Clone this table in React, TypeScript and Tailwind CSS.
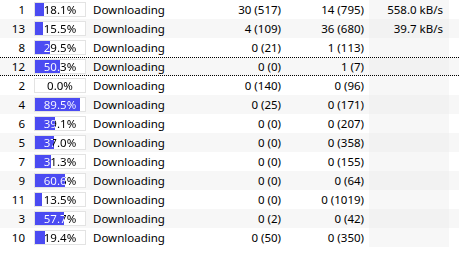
import React from 'react';

type Row = {
  id: number;
  progress: number;
  seeds: string;
  peers: string;
  speed?: string;
};

const ROWS: Row[] = [
  { id: 1, progress: 18.1, seeds: '30 (517)', peers: '14 (795)', speed: '558.0 kB/s' },
  { id: 13, progress: 15.5, seeds: '4 (109)', peers: '36 (680)', speed: '39.7 kB/s' },
  { id: 8, progress: 29.5, seeds: '0 (21)', peers: '1 (113)' },
  { id: 12, progress: 50.3, seeds: '0 (0)', peers: '1 (7)' },
  { id: 2, progress: 0.0, seeds: '0 (140)', peers: '0 (96)' },
  { id: 4, progress: 89.5, seeds: '0 (25)', peers: '0 (171)' },
  { id: 6, progress: 39.1, seeds: '0 (0)', peers: '0 (207)' },
  { id: 5, progress: 37.0, seeds: '0 (0)', peers: '0 (358)' },
  { id: 7, progress: 31.3, seeds: '0 (0)', peers: '0 (155)' },
  { id: 9, progress: 60.6, seeds: '0 (0)', peers: '0 (64)' },
  { id: 11, progress: 13.5, seeds: '0 (0)', peers: '0 (1019)' },
  { id: 3, progress: 57.7, seeds: '0 (2)', peers: '0 (42)' },
  { id: 10, progress: 19.4, seeds: '0 (50)', peers: '0 (350)' },
];

const FOCUSED = 3;

// bar is 50px wide inside its border; the label turns white over the filled part
function Progress({ value }: { value: number }) {
  const fill = value / 2;
  return (
    <div
      className="flex h-[15px] w-[52px] items-center justify-center border border-[#e3e3e3]"
      style={{ background: `linear-gradient(to right, #4b4bf2 ${fill}px, #ffffff ${fill}px)` }}
    >
      <span
        className="block w-[50px] bg-clip-text text-center text-transparent"
        style={{ backgroundImage: `linear-gradient(to right, #ffffff ${fill}px, #000000 ${fill}px)` }}
      >
        {value.toFixed(1)}%
      </span>
    </div>
  );
}

export default function App() {
  return (
    <div className="h-[253px] w-[459px] overflow-hidden bg-white font-['Noto_Sans',sans-serif] text-[11.5px] leading-none text-black">
      {ROWS.map((r, i) => {
        const alt = i % 2 === 1;
        return (
          <div
            key={r.id}
            className={`flex h-[19px] items-center ${alt ? 'bg-[#f7f7f7]' : 'bg-white'} ${
              i === FOCUSED ? 'border-y border-dotted border-black' : ''
            }`}
          >
            <div className="w-[28px] pr-[3px] text-right">{r.id}</div>
            <div className="flex w-[62px] pl-[6px]">
              <Progress value={r.progress} />
            </div>
            <div className="w-[116px] pl-[3px]">Downloading</div>
            <div className="w-[80px] pr-[5px] text-right">{r.seeds}</div>
            <div className="w-[83px] pr-[5px] text-right">{r.peers}</div>
            <div
              className={`flex h-full w-[80px] items-center justify-end pr-[6px] ${
                alt ? 'bg-[#f2f2f2]' : 'bg-[#f7f7f7]'
              }`}
            >
              {r.speed ?? ''}
            </div>
            <div className="h-full flex-1" />
          </div>
        );
      })}
    </div>
  );
}
